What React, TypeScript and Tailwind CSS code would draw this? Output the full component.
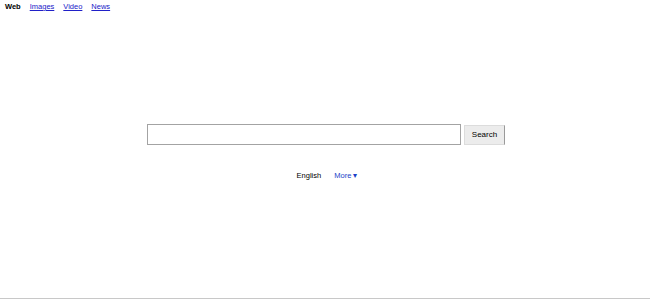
import React from "react";

export default function App() {
  return (
    <div className="h-[300px] w-full bg-white flex flex-col" style={{ fontFamily: '"Liberation Sans", Arial, sans-serif' }}>
      <div className="h-[298px] flex flex-col">
        <nav className="flex items-center gap-[9px] pl-[5px] pt-[1px] text-[7.5px] leading-[11px]">
          <span className="font-bold text-black">Web</span>
          <a href="#" className="text-[#2020c8] underline">Images</a>
          <a href="#" className="text-[#2020c8] underline">Video</a>
          <a href="#" className="text-[#2020c8] underline">News</a>
        </nav>
        <div className="mt-[112px] flex justify-center items-center gap-[3px] pl-[2px]">
          <input
            type="text"
            className="w-[314px] h-[21px] border border-[#a3a3a3] bg-white outline-none"
          />
          <button className="h-[20px] w-[41px] border border-[#dcdcdc] border-r-[#9a9a9a] bg-[#ececec] text-[8px] text-black leading-none">
            Search
          </button>
        </div>
        <div className="mt-[25px] flex justify-center items-center gap-[13px] text-[7.5px] leading-[11px] pl-[4px]">
          <span className="text-black">English</span>
          <a href="#" className="text-[#1a3fc8]">More ▾</a>
        </div>
      </div>
      <div className="h-px bg-[#c8c8c8]" />
      <div className="h-px bg-white" />
    </div>
  );
}
